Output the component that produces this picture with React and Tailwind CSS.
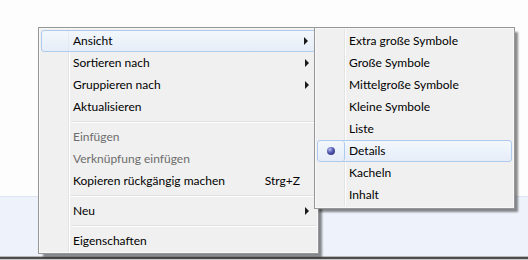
const mainItems = [
  { label: "Ansicht", sub: true, hot: true },
  { label: "Sortieren nach", sub: true },
  { label: "Gruppieren nach", sub: true },
  { label: "Aktualisieren" },
  { sep: true },
  { label: "Einfügen", off: true },
  { label: "Verknüpfung einfügen", off: true },
  { label: "Kopieren rückgängig machen", key: "Strg+Z" },
  { sep: true },
  { label: "Neu", sub: true },
  { sep: true },
  { label: "Eigenschaften" },
];

const viewItems = [
  { label: "Extra große Symbole" },
  { label: "Große Symbole" },
  { label: "Mittelgroße Symbole" },
  { label: "Kleine Symbole" },
  { label: "Liste" },
  { label: "Details", radio: true, hot: true },
  { label: "Kacheln" },
  { label: "Inhalt" },
];

function Separator() {
  return (
    <div className="flex h-[8px]">
      <div className="w-[28px] shrink-0 border-r border-[#e2e3e3] shadow-[1px_0_0_#ffffff]" />
      <div className="flex flex-1 flex-col justify-center pl-[2px]">
        <div className="h-px bg-[#e0e0e0]" />
        <div className="h-px bg-white" />
      </div>
    </div>
  );
}

function Row({ item }) {
  const hot = item.hot;
  return (
    <div
      className={
        "flex h-[22px] items-center " +
        (hot
          ? "rounded-[3px] border border-[#aecbef] bg-gradient-to-b from-[#f3f7fc] to-[#e6edf8]"
          : "")
      }
    >
      <div
        className={
          "flex h-full shrink-0 items-center justify-center " +
          (hot ? "w-[27px] " : "w-[28px] ") +
          (item.radio
            ? "rounded-[3px] border-r border-[#aecbef]"
            : hot
            ? "border-r border-[#e6eaf0]"
            : "border-r border-[#e2e3e3] shadow-[1px_0_0_#ffffff]")
        }
      >
        {item.radio && (
          <div className="h-[8px] w-[8px] rounded-full bg-[radial-gradient(circle_at_35%_30%,#b9bdf0_0%,#5258b0_45%,#24276a_100%)]" />
        )}
      </div>
      <div
        className={
          "flex-1 pl-[4px] " + (item.off ? "text-[#6d6d6d]" : "text-black")
        }
      >
        {item.label}
      </div>
      {item.key && <div className="pr-[2px] text-black">{item.key}</div>}
      {(item.sub || item.key) && (
        <div className="flex w-[14px] shrink-0 items-center">
          {item.sub && (
            <div className="ml-[3px] h-0 w-0 border-y-[4px] border-l-[4px] border-y-transparent border-l-[#1a1a1a]" />
          )}
        </div>
      )}
    </div>
  );
}

export default function App() {
  return (
    <div className="relative h-[260px] w-[528px] overflow-hidden font-['Segoe_UI','Lato',sans-serif] text-[12px]">
      <div className="flex h-full flex-col">
        <div className="h-[196px] bg-[#fdfdfd]" />
        <div className="h-px bg-[#dbe5f3]" />
        <div className="flex-1 bg-[#eef3fb]" />
        <div className="h-px bg-[#b8b8b8]" />
        <div className="h-[2px] bg-[#4d4d4d]" />
        <div className="h-px bg-[#c8c8c8]" />
      </div>

      <div className="absolute left-[38px] top-[27px] w-[281px] border border-[#979797] bg-[#f0f0f0] px-[2px] pb-[1px] pt-[2px] shadow-[inset_0_0_0_1px_#f8f8f8,4px_4px_2px_-1px_rgba(0,0,0,0.45)]">
        {mainItems.map((it, i) =>
          it.sep ? <Separator key={i} /> : <Row key={i} item={it} />
        )}
      </div>

      <div className="absolute left-[314px] top-[27px] w-[201px] border border-[#979797] bg-[#f0f0f0] p-[2px] shadow-[inset_0_0_0_1px_#f8f8f8,4px_4px_2px_-1px_rgba(0,0,0,0.45)]">
        {viewItems.map((it, i) => (
          <Row key={i} item={it} />
        ))}
      </div>
    </div>
  );
}
